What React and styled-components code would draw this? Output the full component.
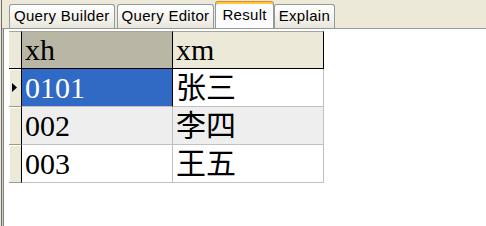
import { Fragment } from 'react';
import styled, { createGlobalStyle } from 'styled-components';

const GlobalStyle = createGlobalStyle`
  html, body {
    margin: 0;
    padding: 0;
    background: #fff;
  }
  #root {
    width: 486px;
    height: 226px;
  }
`;

const Window = styled.div`
  width: 486px;
  height: 226px;
  box-sizing: border-box;
  padding-left: 1px;
  background: #ece9d8;
  display: flex;
  overflow: hidden;
`;

const Panel = styled.div`
  flex: 1;
  display: flex;
  flex-direction: column;
  border-left: 1px solid #6c6c6c;
`;

const TabStrip = styled.div`
  height: 28px;
  display: flex;
  align-items: flex-end;
  gap: 2px;
  padding-left: 7px;
  border-bottom: 1px solid #919b9c;
  font-family: "Liberation Sans", Arial, sans-serif;
  font-size: 15px;
  letter-spacing: 0.3px;
  color: #000;
`;

const Tab = styled.div`
  box-sizing: border-box;
  height: ${(p) => (p.$active ? '27px' : '24px')};
  padding: ${(p) => (p.$active ? '3px 6px 0 6px' : '1px 4px 0 4px')};
  margin: ${(p) => (p.$active ? '0 -2px 0 -1px' : '0')};
  line-height: 20px;
  border: 1px solid #919b9c;
  border-bottom: none;
  border-radius: 3px 3px 0 0;
  background: ${(p) =>
    p.$active ? '#fcfcfe' : 'linear-gradient(#ffffff, #f3f2ec 60%, #e8e6dc)'};
  position: relative;
  z-index: ${(p) => (p.$active ? 1 : 0)};
  box-shadow: ${(p) =>
    p.$active ? 'inset 0 2px 0 #ffc83c, inset 0 1px 0 #e68b2c' : 'none'};
  border-top-color: ${(p) => (p.$active ? '#e68b2c' : '#919b9c')};
`;

const Content = styled.div`
  flex: 1;
  background: #fff;
  border-left: 1px solid #d4d0c8;
  box-shadow: inset 1px 0 0 #808080;
  padding: 2px 0 0 6px;
`;

const Grid = styled.div`
  display: grid;
  grid-template-columns: 13px 151px 151px;
  grid-auto-rows: 38px;
  font-family: "Liberation Serif", "Noto Sans CJK SC", serif;
  font-size: 30px;
  color: #000;
`;

const HeadCell = styled.div`
  box-sizing: border-box;
  border-top: 1px solid #a8a596;
  border-right: 1px solid #000;
  border-bottom: 1px solid #000;
  background: ${(p) => (p.$selected ? '#bab6a5' : '#ece9d8')};
  padding-left: 3px;
  line-height: 36px;
  white-space: nowrap;
`;

const RowHead = styled.div`
  box-sizing: border-box;
  border-right: 1px solid #000;
  border-bottom: 1px solid #9d9a8a;
  background: #ece9d8;
  box-shadow: inset 1px 1px 0 #fff;
  display: flex;
  align-items: center;
  padding-left: 3px;
`;

const Cell = styled.div`
  box-sizing: border-box;
  border-right: 1px solid ${(p) => (p.$selected ? '#000' : '#c0c0c0')};
  border-bottom: 1px solid #c0c0c0;
  background: ${(p) => (p.$selected ? '#316ac5' : p.$alt ? '#eeeeee' : '#fff')};
  color: ${(p) => (p.$selected ? '#fff' : '#000')};
  padding-left: 3px;
  line-height: 37px;
  white-space: nowrap;
`;

const rows = [
  { xh: '0101', xm: '张三' },
  { xh: '002', xm: '李四' },
  { xh: '003', xm: '王五' },
];

const tabs = ['Query Builder', 'Query Editor', 'Result', 'Explain'];

export default function App() {
  return (
    <>
      <GlobalStyle />
      <Window>
        <Panel>
          <TabStrip>
            {tabs.map((t) => (
              <Tab key={t} $active={t === 'Result'}>
                {t}
              </Tab>
            ))}
          </TabStrip>
          <Content>
            <Grid>
              <HeadCell />
              <HeadCell $selected>xh</HeadCell>
              <HeadCell>xm</HeadCell>
              {rows.map((r, i) => (
                <Fragment key={r.xh}>
                  <RowHead>
                    {i === 0 && (
                      <svg width="5" height="9" viewBox="0 0 5 9">
                        <path d="M0 0 L5 4.5 L0 9 Z" fill="#000" />
                      </svg>
                    )}
                  </RowHead>
                  <Cell $selected={i === 0} $alt={i === 1}>
                    {r.xh}
                  </Cell>
                  <Cell $alt={i === 1}>{r.xm}</Cell>
                </Fragment>
              ))}
            </Grid>
          </Content>
        </Panel>
      </Window>
    </>
  );
}
